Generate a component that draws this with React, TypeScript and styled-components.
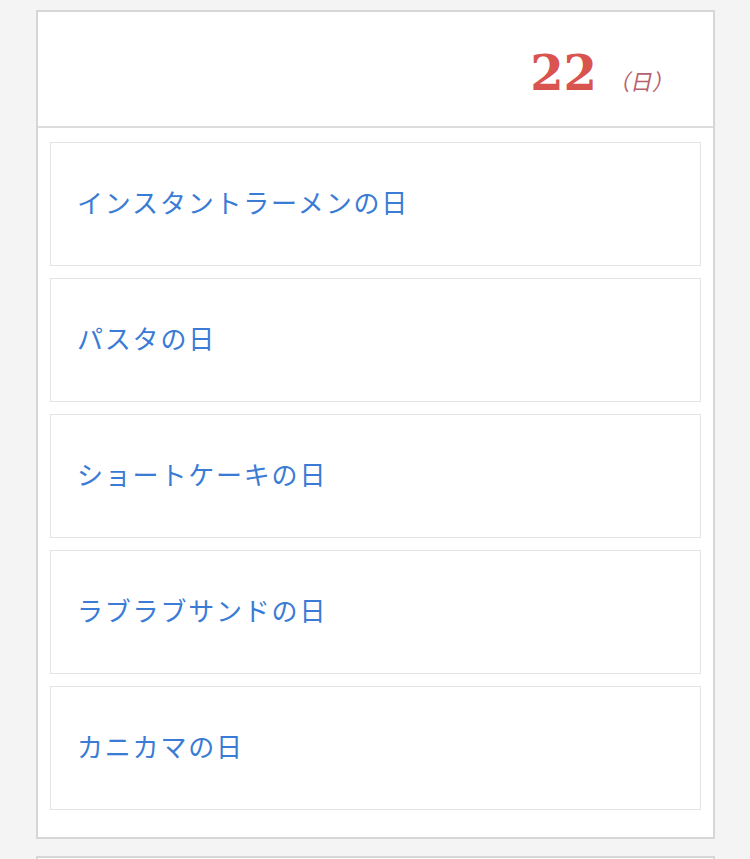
import React from 'react';
import styled, { createGlobalStyle } from 'styled-components';

const GlobalStyle = createGlobalStyle`
  body {
    margin: 0;
    background-color: #f4f4f4;
    font-family: 'Noto Sans CJK JP', 'Noto Sans', sans-serif;
  }
`;

const Page = styled.div`
  padding: 10px 35px 0 36px;
  display: flex;
  flex-direction: column;
  gap: 17px;
`;

const DayCard = styled.section`
  background: #fff;
  border: 2px solid #d6d6d6;
`;

const DayHeader = styled.header`
  height: 116px;
  box-sizing: border-box;
  border-bottom: 2px solid #dcdcdc;
  display: flex;
  justify-content: flex-end;
  align-items: baseline;
  padding: 37px 37px 0 0;
`;

const DateNum = styled.span`
  font-family: 'DejaVu Serif', 'Liberation Serif', serif;
  font-weight: bold;
  font-size: 48px;
  line-height: 1;
  color: #d9534f;
`;

const Weekday = styled.span`
  display: inline-block;
  font-family: 'Noto Sans CJK JP', sans-serif;
  font-size: 22px;
  color: #b8616e;
  margin-left: 13px;
  transform: skewX(-12deg);
`;

const EventList = styled.ul`
  list-style: none;
  margin: 0;
  padding: 14px 12px 27px;
  display: flex;
  flex-direction: column;
  gap: 12px;
`;

const EventItem = styled.li`
  height: 124px;
  box-sizing: border-box;
  border: 1px solid #e4e4e4;
  display: flex;
  align-items: center;
  padding: 0 0 4px 26px;
`;

const EventLink = styled.a`
  color: #3a7bd5;
  font-size: 26px;
  line-height: 1;
  letter-spacing: 1.8px;
  text-decoration: none;
`;

const events = [
  'インスタントラーメンの日',
  'パスタの日',
  'ショートケーキの日',
  'ラブラブサンドの日',
  'カニカマの日',
];

const App: React.FC = () => (
  <>
    <GlobalStyle />
    <Page>
      <DayCard>
        <DayHeader>
          <DateNum>22</DateNum>
          <Weekday>（日）</Weekday>
        </DayHeader>
        <EventList>
          {events.map((name) => (
            <EventItem key={name}>
              <EventLink href="#">{name}</EventLink>
            </EventItem>
          ))}
        </EventList>
      </DayCard>
      <DayCard>
        <DayHeader />
      </DayCard>
    </Page>
  </>
);

export default App;
